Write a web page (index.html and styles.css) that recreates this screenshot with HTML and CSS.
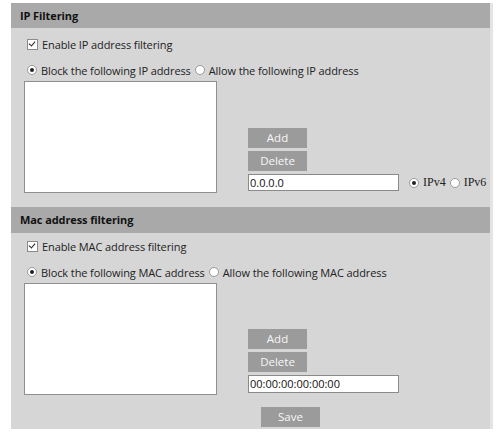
FILE: index.html
```html
<!DOCTYPE html>
<html>
<head>
<meta charset="utf-8">
<link rel="stylesheet" href="styles.css">
</head>
<body>
<div class="panel">
  <div class="sec-head">IP Filtering</div>
  <div class="sec-body">
    <div class="row"><span class="cb"></span><span>Enable IP address filtering</span></div>
    <div class="row"><span class="rd on"></span><span>Block the following IP address</span><span class="rd"></span><span>Allow the following IP address</span></div>
    <div class="list-area">
      <div class="listbox"></div>
      <div class="controls">
        <div class="btn">Add</div>
        <div class="btn">Delete</div>
        <div class="input-row">
          <div class="field">0.0.0.0</div>
          <div class="ipver"><span class="rd on"></span><span class="serif">IPv4</span><span class="rd"></span><span class="serif">IPv6</span></div>
        </div>
      </div>
    </div>
  </div>
  <div class="sec-head second">Mac address filtering</div>
  <div class="sec-body last">
    <div class="row"><span class="cb"></span><span>Enable MAC address filtering</span></div>
    <div class="row"><span class="rd on"></span><span>Block the following MAC address</span><span class="rd"></span><span>Allow the following MAC address</span></div>
    <div class="list-area">
      <div class="listbox"></div>
      <div class="controls">
        <div class="btn">Add</div>
        <div class="btn">Delete</div>
        <div class="input-row">
          <div class="field tall">00:00:00:00:00:00</div>
        </div>
      </div>
    </div>
    <div class="save-row"><div class="btn">Save</div></div>
  </div>
</div>
</body>
</html>
```

FILE: styles.css
```css
html, body { margin: 0; padding: 0; background: #fff; }
body {
  font-family: "Open Sans", "Noto Sans", sans-serif;
  font-size: 11px;
  color: #222;
}
.panel {
  margin: 3px 0 0 11px;
  width: 479px;
  background: #d6d6d6;
  border-right: 3px solid #e4e4e4;
}
.sec-head {
  height: 25px;
  line-height: 25px;
  background: #a9a9a9;
  padding-left: 9px;
  font-weight: bold;
  font-size: 11px;
  color: #111;
  letter-spacing: -0.1px;
}
.sec-head.second { height: 26px; line-height: 26px; }
.sec-body {
  padding: 6px 0 14px 16px;
}
.sec-body.last { padding: 3px 0 1px 16px; }
.row {
  display: flex;
  align-items: center;
  height: 20px;
  margin-bottom: 6px;
  white-space: nowrap;
  letter-spacing: -0.1px;
}
.cb {
  width: 9px;
  height: 9px;
  border: 1px solid #8a8a8a;
  background: #fff;
  margin-right: 4px;
  position: relative;
  flex: none;
}
.cb::after {
  content: "";
  position: absolute;
  left: 2px;
  top: 0px;
  width: 3px;
  height: 5px;
  border: solid #222;
  border-width: 0 1.5px 1.5px 0;
  transform: rotate(40deg);
}
.rd {
  width: 8px;
  height: 8px;
  border: 1px solid #9a9a9a;
  border-radius: 50%;
  background: #fff;
  margin-right: 4px;
  flex: none;
  position: relative;
}
.row .rd + span + .rd { margin-left: 4px; }
.rd.on::after {
  content: "";
  position: absolute;
  left: 2px;
  top: 2px;
  width: 4px;
  height: 4px;
  border-radius: 50%;
  background: #222;
}
.list-area {
  display: flex;
  align-items: flex-end;
  margin-left: -3px;
  margin-top: -5px;
}
.listbox {
  width: 191px;
  height: 110px;
  background: #fff;
  border: 1px solid #8f8f8f;
  flex: none;
}
.controls {
  margin-left: 31px;
  margin-bottom: 2px;
  display: flex;
  flex-direction: column;
  gap: 3px;
}
.btn {
  width: 59px;
  height: 20px;
  line-height: 20px;
  text-align: center;
  background: #9b9b9b;
  color: #f7f7f7;
  font-size: 11.5px;
}
.input-row {
  display: flex;
  align-items: center;
}
.field {
  width: 148px;
  height: 15px;
  line-height: 15px;
  border: 1px solid #8a8a8a;
  background: #fff;
  padding-left: 1px;
  font-size: 11px;
  color: #111;
  box-sizing: content-box;
}
.field.tall { height: 16px; line-height: 16px; }
.ipver {
  display: flex;
  align-items: center;
  margin-left: 10px;
}
.ipver .rd + .serif + .rd { margin-left: 4px; }
.serif {
  font-family: "Liberation Serif", serif;
  font-size: 12px;
}
.save-row {
  padding: 12px 0 1px 234px;
  height: 20px;
}
```
